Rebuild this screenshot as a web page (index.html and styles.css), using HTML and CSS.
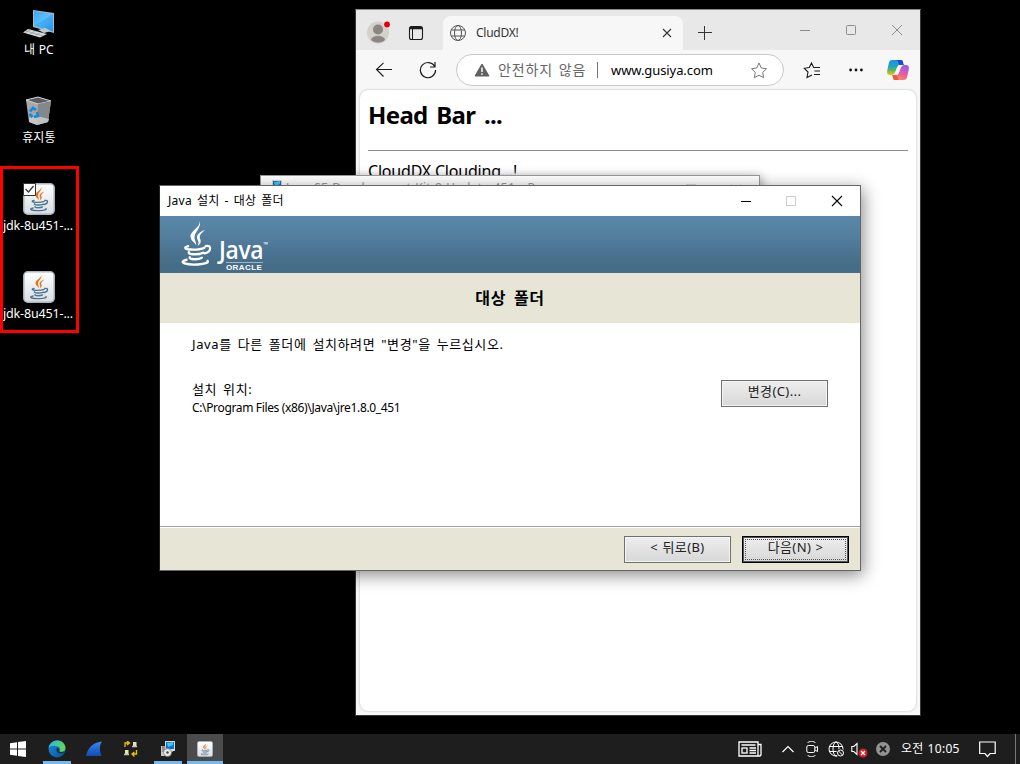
FILE: index.html
```html
<!DOCTYPE html>
<html lang="ko">
<head>
<meta charset="utf-8">
<title>Desktop</title>
<link rel="stylesheet" href="styles.css">
</head>
<body>
<svg width="0" height="0" class="defs">
  <defs>
    <linearGradient id="screen" x1="0" y1="0" x2="1" y2="1"><stop offset="0" stop-color="#36a6f4"/><stop offset=".5" stop-color="#62c0fb"/><stop offset="1" stop-color="#1e95ee"/></linearGradient>
    <linearGradient id="tile" x1="0" y1="0" x2="0" y2="1"><stop offset="0" stop-color="#fff"/><stop offset="1" stop-color="#d9dee2"/></linearGradient>
    <linearGradient id="edgeBlue" x1="0" y1="0" x2="1" y2="1"><stop offset="0" stop-color="#1a8de0"/><stop offset="1" stop-color="#0c4f9e"/></linearGradient>
    <linearGradient id="edgeGreen" x1="0" y1="0" x2="1" y2=".5"><stop offset="0" stop-color="#27b5e8"/><stop offset="1" stop-color="#5fd84f"/></linearGradient>
    <linearGradient id="copA" x1="0" y1="0" x2="0" y2="1"><stop offset="0" stop-color="#1a8fe8"/><stop offset=".45" stop-color="#25a3c0"/><stop offset=".7" stop-color="#68b94c"/><stop offset="1" stop-color="#f2c414"/></linearGradient>
    <linearGradient id="copB" x1=".6" y1="0" x2=".2" y2="1"><stop offset="0" stop-color="#9a5cf0"/><stop offset=".5" stop-color="#ea5aa0"/><stop offset="1" stop-color="#ff9360"/></linearGradient>
    <linearGradient id="fin" x1="0" y1="0" x2="0" y2="1"><stop offset="0" stop-color="#3888f0"/><stop offset="1" stop-color="#124bb4"/></linearGradient>
    <symbol id="java-steam" viewBox="0 0 32 32">
      <path d="M18 3c1.500 4-6 6-5.500 9.500.2 2 2.500 3 3.500 4.500.2-2-1.500-3-1-5C15.500 9.300 19.600 7 18 3zM21.500 8.500c-3 1-5.300 2.500-5 4.500.2 1.600 2 2.400 0 4.700 4-2.400 1.500-4 1.600-5.200.1-1.500 1.800-2.600 3.400-4z"/>
    </symbol>
    <symbol id="java-cup" viewBox="0 0 32 32">
      <path d="M11 17.500c-3 .8-2 1.800 2 1.900 4 .1 6.500-.4 8-1M21.800 17.500c4-1 3.500 3.300-.7 4M11.500 20.800c-1.300 1.400 6 1.700 9 .3M12 23.600c-1 1.200 5 1.600 7.500.3M10 25c-6 1.500.5 3 7 2.600 4-.2 7-1 6-2" fill="none" stroke-width="1.350" stroke-linecap="round"/>
    </symbol>
    <symbol id="jdk" viewBox="0 0 32 32">
      <rect x=".8" y=".8" width="30.400" height="30.400" rx="4" fill="url(#tile)" stroke="#a9b6be" stroke-width="1.500"/>
      <use href="#java-steam" fill="#ec7016"/><use href="#java-cup" stroke="#4c7593"/>
    </symbol>
    <symbol id="installer" viewBox="0 0 16 16">
      <path d="M5 0h10v10H5z" fill="#d7dbe0"/><path d="M6 1h8v7H6z" fill="#0c71ce"/><path d="M7 2l6-1v3L8 6z" fill="#48c7ee"/><path d="M7 10h6v1H7z" fill="#999"/>
      <path d="M1 5h5v10H1z" fill="#c9c9c1"/><path d="M2 6h3M2 8h3M2 10h3" stroke="#555"/><circle cx="7.500" cy="11.500" r="4" fill="#e6e8e6" stroke="#777" stroke-width=".7"/><circle cx="7.500" cy="11.500" r="1.200" fill="#444"/>
    </symbol>
  </defs>
</svg>
<main class="desktop">
  <section class="shortcuts">
    <div class="shortcut">
      <svg width="34" height="32" viewBox="0 0 34 32"><path d="M11 3l21 3v20l-21-6z" fill="#acbac4"/><path d="M12 4l19 3v17.500L12 19z" fill="url(#screen)"/><path d="M12 19L31 7v17.500z" fill="#259cef" opacity=".45"/><path d="M16 23l7-2 6 3-7 2z" fill="#c3c8cd"/><path d="M6 22l19 5-7 3.500-17-5z" fill="#d6d9dc"/><path d="M4 24l17 5M9 22.500l-6 3M14 24l-6 3M19 25.500l-6 3" stroke="#8a9095" stroke-width=".6"/></svg>
      <span class="pc">내 PC</span>
    </div>
    <div class="shortcut">
      <svg width="32" height="32" viewBox="0 0 32 32"><path d="M3 5l12-3 13 4-3 21-11 3-8-3z" fill="#a5a7a9"/><path d="M3 5l12 4 13-3-13-4z" fill="#5c5d5e" stroke="#d1d3d4"/><path d="M15 9l13-3-3 21-11 3z" fill="#85888b"/><path d="M6 23l8-2 12 3-1 3-11 3-8-3z" fill="#cccfd1" opacity=".8"/><g fill="none" stroke="#1387df" stroke-width="2.600"><path d="M7 16.500l3-3.500 3 2"/><path d="M14 17l1 4-4 1"/><path d="M9.500 22l-3-3"/></g></svg>
      <span class="bin">휴지통</span>
    </div>
    <div class="shortcut">
      <svg width="32" height="32" viewBox="0 0 32 32"><use href="#jdk"/><path d="M.5.5h12v12H.5z" fill="#fff" stroke="#333"/><path d="M2.500 6l3 3 5-6" fill="none" stroke="#333" stroke-width="1.200"/></svg>
      <span class="jdk">jdk-8u451-...</span>
    </div>
    <div class="shortcut">
      <svg width="32" height="32"><use href="#jdk"/></svg>
      <span class="jdk">jdk-8u451-...</span>
    </div>
  </section>
  <div class="highlight"></div>

  <section class="browser">
    <div class="tabstrip">
      <svg class="avatar" width="24" height="25" viewBox="0 0 24 25"><circle cx="11" cy="13.500" r="11" fill="#d4d0cc"/><circle cx="11" cy="10.500" r="5" fill="#8c8682"/><path d="M3.500 21c1-6 14-6 15 0-4 4-11 4-15 0z" fill="#8c8682" stroke="#d4d0cc" stroke-width=".8"/><circle cx="20" cy="5.500" r="3.500" fill="#e6e6e6"/><circle cx="20" cy="5.500" r="2.900" fill="#e3000b"/></svg>
      <svg class="workspaces" width="16" height="16" viewBox="0 0 16 16" fill="none" stroke="#1b1b1b"><rect x="1.500" y="1.500" width="13" height="13" rx="2" stroke-width="1.100"/><path d="M2 3h12" stroke-width="2.500"/><path d="M4.500 4v10" stroke-width="1"/></svg>
      <div class="tab">
        <svg width="16" height="16" viewBox="0 0 16 16" fill="none" stroke="#555" stroke-width="1"><circle cx="8" cy="8" r="7.500"/><ellipse cx="8" cy="8" rx="3.500" ry="7.500"/><path d="M1.300 5h13.400M1.300 11h13.400"/></svg>
        <span>CludDX!</span>
        <svg width="10" height="10" viewBox="0 0 10 10" stroke="#333" stroke-width="1.100"><path d="M1 1l8 8M9 1L1 9"/></svg>
      </div>
      <svg class="plus" width="14" height="14" stroke="#333"><path d="M6.500 0v14M0 6.500h14"/></svg>
      <svg class="controls" width="104" height="12" viewBox="0 0 104 12" fill="none" stroke="#8d8d8d"><path d="M1 6.500h10"/><rect x="47.500" y="1.500" width="9" height="9" rx="1"/><path d="M93 1l10 10M103 1L93 11"/></svg>
    </div>
    <div class="toolbar">
      <svg class="back" width="18" height="16" viewBox="0 0 18 16" fill="none" stroke="#1b1b1b" stroke-width="1.100"><path d="M17 7.500H1.500M8.500.8L1.500 7.500l7 7"/></svg>
      <svg class="reload" width="18" height="18" viewBox="0 0 18 18" fill="none" stroke="#1b1b1b" stroke-width="1.200"><path d="M15.700 5.500A7.600 7.600 0 1 0 16.600 9M16 1v5h-5"/></svg>
      <div class="address">
        <svg class="warn" width="16" height="14" viewBox="0 0 16 14"><path d="M8 1l7 12H1z" fill="#606060" stroke="#606060" stroke-linejoin="round"/><path d="M8 4.500v4.500M8 10.300v1.500" stroke="#fff" stroke-width="1.500"/></svg>
        <span class="unsafe">안전하지 않음</span><i></i><span class="url">www.gusiya.com</span>
        <svg class="star" width="18" height="17" viewBox="0 0 18 17" fill="none" stroke="#777"><path d="M9 1l2.300 5 5.200.7-3.800 3.700.9 5.300L9 13.200l-4.600 2.500.9-5.300L1.500 6.700 6.700 6z"/></svg>
      </div>
      <svg class="fav" width="18" height="17" viewBox="0 0 18 17" fill="none" stroke="#1b1b1b" stroke-width="1.100"><path d="M11.500 5.500H10.700L8.500 1 6.300 5.500l-5 .8L5 10l-1 5.500 5-2.600M11.500 5.500H17M11.500 9H17M11 12.500h6"/></svg>
      <svg class="dots" width="14" height="4" fill="#111"><circle cx="1.600" cy="2" r="1.400"/><circle cx="7" cy="2" r="1.400"/><circle cx="12.400" cy="2" r="1.400"/></svg>
      <svg class="copilot" width="22" height="20" viewBox="0 0 22 20"><path d="M5 0h9c2 0 2 2 1.500 4L12 5C9 6 9 15 5 15H3C-1 15 0 11 1 7c1-4 1-7 4-7z" fill="url(#copA)"/><path d="M11 0h3c2 0 2 3 3 5h-4c-2 0-1-5-4-5z" fill="#174bd0"/><path d="M17 20H8c-2 0-2-2-1.500-4L10 15c3-1 3-10 7-10h2c4 0 3 4 2 8-1 4-1 7-4 7z" fill="url(#copB)"/><path d="M11 20H8c-2 0-2-3-3-5h4c2 0 1 5 4 5z" fill="#ee5b3f"/><path d="M11.500 5.500h3l-3.500 9H8z" fill="#f7f7f7"/></svg>
    </div>
    <div class="page"><h1>Head Bar ...</h1><hr><p>CloudDX Clouding...!</p></div>
  </section>

  <section class="progress">
    <svg width="16" height="16"><use href="#installer"/></svg><span>Java SE Development Kit 8 Update 451 - Progress</span>
    <svg class="ghost" width="58" height="12" fill="none" stroke="#ddd"><rect x="1.500" y="1.500" width="9" height="9"/><path d="M46 1l10 10M56 1L46 11"/></svg>
  </section>

  <section class="dialog">
    <header><span>Java 설치 - 대상 폴더</span>
      <svg width="103" height="12" viewBox="0 0 103 12" fill="none"><path d="M1 6.500h10" stroke="#000"/><rect x="46.500" y="1.500" width="9" height="9" stroke="#ccc"/><path d="M92 1l10 10M102 1L92 11" stroke="#000" stroke-width="1.100"/></svg>
    </header>
    <div class="banner">
      <svg class="logo-cup" width="46" height="46" viewBox="6 2 24 27" preserveAspectRatio="none"><g><use href="#java-steam" width="32" height="32" fill="#fff"/><use href="#java-cup" width="32" height="32" stroke="#fff"/></g></svg>
      <div class="wordmark"><div class="java">Java<sup>™</sup></div><div class="oracle">ORACLE</div></div>
    </div>
    <h2><span>대상 폴더</span></h2>
    <div class="content">
      <div class="copy"><p class="hint">Java를 다른 폴더에 설치하려면 "변경"을 누르십시오.</p><p class="label">설치 위치:</p><p class="path">C:\Program Files (x86)\Java\jre1.8.0_451</p></div>
      <button class="change"><span>변경(C)...</span></button>
    </div>
    <footer><button><span>&lt; 뒤로(B)</span></button><button class="default"><span>다음(N) &gt;</span></button></footer>
  </section>

  <nav class="taskbar">
    <div class="app start"><svg width="16" height="16" viewBox="0 0 16 16" fill="#fff"><path d="M0 2.200l7-1v6.300H0zM8 1l8-1v7.500H8zM0 8.500h7v6.300l-7-1zM8 8.500h8V16l-8-1z"/></svg></div>
    <div class="app running edge"><svg width="18" height="18" viewBox="0 0 18 18"><circle cx="9" cy="9" r="8.500" fill="url(#edgeBlue)"/><path d="M.6 8C2-2 17-2 17.500 8c0 3-3 4.500-6 3.500 1-1 1-4-2-5C6 5.200 2 5.500.6 8z" fill="url(#edgeGreen)"/><path d="M11 11.200c1 1 4 1.200 5.800.2-1.300 2-4.300 2.500-6.500 1.600-2-1-2.600-3-1.100-5.500 1.800.6 2.300 2.300 1.800 3.700z" fill="#17334d"/></svg></div>
    <div class="app"><svg width="16" height="16" viewBox="0 0 16 16"><path d="M0 15C2 6 8 1 16 .5 13 5 13.500 10 15.500 15z" fill="url(#fin)"/></svg></div>
    <div class="app"><svg width="16" height="16" viewBox="0 0 16 16"><path d="M2 6V2h4M4 0l2.500 2L4 4M13.500 9v4H10M11.500 11L9 13l2.500 2.500" fill="none" stroke="#f0c000" stroke-width="1.300"/><path d="M10 1h3.500v4H10zM2 9h3.500v4H2z" fill="#e8e0bf"/><path d="M9 5.500h5M1 13.500h5" stroke="#c7c3ae" stroke-width="1.500"/></svg></div>
    <div class="app running"><svg width="16" height="16"><use href="#installer"/></svg></div>
    <div class="app running active"><svg width="16" height="16"><use href="#jdk"/></svg></div>
    <div class="tray">
      <svg class="news" width="24" height="16" viewBox="0 0 24 16" fill="none" stroke="#fff" stroke-width="1.300"><path d="M1 1h19v14H1zM20 3.500h3V14l-1 1H3M3.500 4h14"/><rect x="4" y="7" width="5" height="5"/><path d="M11.500 7H18M11.500 9.500H18M11.500 12H18"/></svg>
      <svg class="chev" width="12" height="8" fill="none" stroke="#fff" stroke-width="1.200"><path d="M.5 7L6 1.500 11.500 7"/></svg>
      <svg class="cam" width="12" height="16" fill="none" stroke="#fff"><rect x=".8" y="4.500" width="8" height="7" rx="1.500"/><path d="M9 7l2.500-1.500v5L9 9M1.500 2C3-.2 8-.2 9.500 2M1.500 14c1.500 2.200 6.500 2.200 8 0"/></svg>
      <svg class="net" width="18" height="17" fill="none" stroke="#fff"><circle cx="8" cy="8" r="7"/><ellipse cx="8" cy="8" rx="3" ry="7"/><path d="M1 5.500h14M1 10.500h14"/><circle cx="12.500" cy="12" r="4.200" fill="#1e1e1e" stroke="none"/><circle cx="12.500" cy="12" r="3"/><path d="M10.500 10l4 4"/></svg>
      <svg class="sound" width="18" height="17" fill="none" stroke="#fff" stroke-width="1.100"><path d="M.8 5.500h2L6 2.500v11l-3.200-3h-2z"/><circle cx="12" cy="12" r="4.500" fill="#d91e28" stroke="none"/><path d="M10 10l4 4M14 10l-4 4" stroke-width="1.300"/></svg>
      <svg class="stop" width="14" height="14"><circle cx="7" cy="7" r="7" fill="#929292"/><path d="M4 4l6 6M10 4l-6 6" stroke="#1e1e1e" stroke-width="1.800"/></svg>
      <span>오전 10:05</span>
      <svg class="notice" width="17" height="17" fill="none" stroke="#fff" stroke-width="1.200"><path d="M.7 1h15.500v11.500H11L8.500 15.500 6 12.500H.7z"/></svg>
      <i></i>
    </div>
  </nav>
</main>
</body>
</html>
```
FILE: styles.css
```css
* { box-sizing: border-box; }
body { margin: 0; background: #000; font-family: "Noto Sans", "Noto Sans CJK KR", sans-serif; color: #000; }
svg { display: block; flex: none; }
p, h1, h2 { margin: 0; }
.defs { position: absolute; }
.desktop { position: relative; width: 1020px; height: 764px; overflow: hidden; background: #000; white-space: nowrap; }

.shortcuts { display: flex; flex-direction: column; width: 78px; padding-top: 7px; }
.shortcut { height: 88px; display: flex; flex-direction: column; align-items: center; color: #fff; font-size: 12px; line-height: 18px; gap: 1px; }
.shortcut .pc, .shortcut .bin { padding-top: 1px; letter-spacing: .2px; }
.shortcut .jdk { font-size: 12.5px; letter-spacing: -.15px; padding-top: 1px; margin-left: -2px; }
.highlight { position: absolute; left: 0; top: 166px; width: 79px; height: 167px; border: 3px solid #f00; }

.browser { position: absolute; left: 355px; top: 9px; width: 566px; height: 707px; border: 1px solid #35393b; border-top-color: #888; background: #f7f7f7; display: flex; flex-direction: column; }
.tabstrip { height: 40px; background: #e8e8e8; display: flex; align-items: flex-start; }
.avatar { margin: 9px 0 0 11px; }
.workspaces { margin: 15px 0 0 17px; }
.tab { margin: 6px 0 0 19px; width: 240px; height: 34px; border-radius: 8px 8px 0 0; background: #f7f7f7; display: flex; align-items: center; padding: 0 11px 0 7px; font-size: 12px; color: #333; }
.tab span { flex: 1; padding: 0 0 2px 10px; letter-spacing: -.25px; }
.plus { margin: 16px 0 0 15px; }
.controls { margin: 14px 17px 0 auto; }
.toolbar { height: 40px; display: flex; align-items: center; }
.back { margin-left: 19px; }
.reload { margin-left: 26px; }
.address { margin-left: 19px; width: 328px; height: 32px; border: 1px solid #c9c9c9; border-radius: 16px; background: #fff; display: flex; align-items: center; font-size: 13px; }
.warn { margin-left: 17px; }
.unsafe { width: 88px; margin-left: 8px; padding-bottom: 2px; font-size: 14px; color: #666; letter-spacing: .9px; word-spacing: 1px; }
.address i { width: 1px; height: 16px; background: #777; margin: 0 13px 0 11px; }
.url { letter-spacing: -.08px; }
.star { margin: 0 15px 0 auto; }
.fav { margin-left: 19px; }
.dots { margin-left: 28px; }
.copilot { margin-left: 24px; }
.page { margin: 0 4px 4px; flex: 1; background: #fff; border-radius: 8px; box-shadow: 0 0 2px #aaa; padding: 7px 8px; }
.page h1 { font-size: 24px; line-height: 36px; font-family: "Noto Sans", sans-serif; letter-spacing: -.65px; word-spacing: 3px; }
.page hr { margin: 17px 0 8px; border: 0; height: 1px; background: #8c8c8c; }
.page p { font-size: 16px; line-height: 24px; letter-spacing: -.2px; }

.progress { position: absolute; left: 260px; top: 175px; width: 500px; height: 380px; border: 1px solid #999; background: #fff; box-shadow: 1px 2px 10px #0006; display: flex; align-items: flex-start; padding: 4px 0 0 6px; font-size: 12px; line-height: 16px; color: #999; }
.progress span { margin: 0 0 0 3px; letter-spacing: .3px; word-spacing: .7px; }
.ghost { margin: 3px 16px 0 auto; }

.dialog { position: absolute; left: 159px; top: 185px; width: 702px; height: 386px; border: 1px solid #666; border-left-color: #222; background: #fff; box-shadow: 2px 4px 16px #0007; display: flex; flex-direction: column; }
.dialog header { height: 30px; display: flex; align-items: center; justify-content: space-between; padding: 0 17px 0 8px; font-size: 12px; }
.dialog header span { letter-spacing: .3px; word-spacing: 1.5px; padding-bottom: 2px; }
.banner { height: 57px; background: linear-gradient(#5988aa 0%, #5580a0 30%, #4b7593 60%, #466d88 85%, #466d88 100%); display: flex; color: #fff; }
.logo-cup { width: 39px; height: 49px; margin: 2px 0 0 20px; }
.wordmark { width: 60px; margin-top: 19px; }
.java { height: 27px; font: 600 26px/28px "Open Sans", sans-serif; transform: scaleX(.88); transform-origin: 0 0; letter-spacing: -.4px; }
.java sup { font-size: 7px; line-height: 0; vertical-align: 12px; }
.oracle { margin-left: 7px; width: 37px; border-top: 1px solid #9eb7c8; font: bold 8px/9px "Liberation Sans", sans-serif; letter-spacing: .4px; }
.dialog h2 { height: 50px; background: #e7e5d6; font-size: 16px; line-height: 50px; font-weight: 700; text-align: center; letter-spacing: .7px; word-spacing: 3px; }
.content { height: 203px; display: flex; justify-content: space-between; padding: 0 32px; }
.hint, .label { font-size: 13px; line-height: 18px; letter-spacing: .6px; word-spacing: 2px; }
.hint { margin-top: 12px; }
.label { margin-top: 27px; }
.path { margin-top: 1px; font-size: 12px; line-height: 17px; letter-spacing: -.35px; }
.dialog button { width: 107px; height: 27px; padding: 0 0 4px; border: 1px solid #707070; background: linear-gradient(#eee, #d7d7d7); box-shadow: inset 0 0 0 1px #f5f5f5; font-family: inherit; font-size: 13px; line-height: 19px; letter-spacing: .4px; word-spacing: .5px; color: #222; }
.dialog .change { margin-top: 57px; }
.dialog footer { height: 44px; border-top: 1px solid #a0a0a0; background: #e7e5d6; box-shadow: inset 0 1px #fff; display: flex; justify-content: flex-end; gap: 11px; padding: 9px 11px 0 0; }
.dialog .default { border: 1px solid #000; box-shadow: inset 0 0 0 1px #555; outline: 1px dotted #555; outline-offset: -4px; }

.taskbar { position: absolute; left: 0; top: 734px; width: 1020px; height: 30px; background: #1e1e1e; display: flex; }
.app { width: 36px; margin-right: 1px; display: flex; align-items: center; justify-content: center; }
.start { width: 35px; margin-right: 4px; }
.running { background: linear-gradient(#76b9ed, #76b9ed) center bottom / 28px 3px no-repeat; }
.app.edge { margin-right: 1px; }
.active { background: linear-gradient(#76b9ed, #76b9ed) center bottom / 36px 3px no-repeat #4b4b4b; }
.tray { margin-left: auto; display: flex; align-items: center; color: #fff; font-size: 12px; }
.chev { margin-left: 20px; }
.cam { margin-left: 12px; }
.net { margin-left: 10px; }
.sound { margin-left: 5px; }
.stop { margin-left: 7px; }
.tray span { margin-left: 11px; width: 59px; letter-spacing: .3px; word-spacing: .5px; padding-bottom: 2px; }
.notice { margin-left: 19px; }
.tray i { width: 1px; height: 30px; margin: 0 4px 0 19px; background: #777; }
```
